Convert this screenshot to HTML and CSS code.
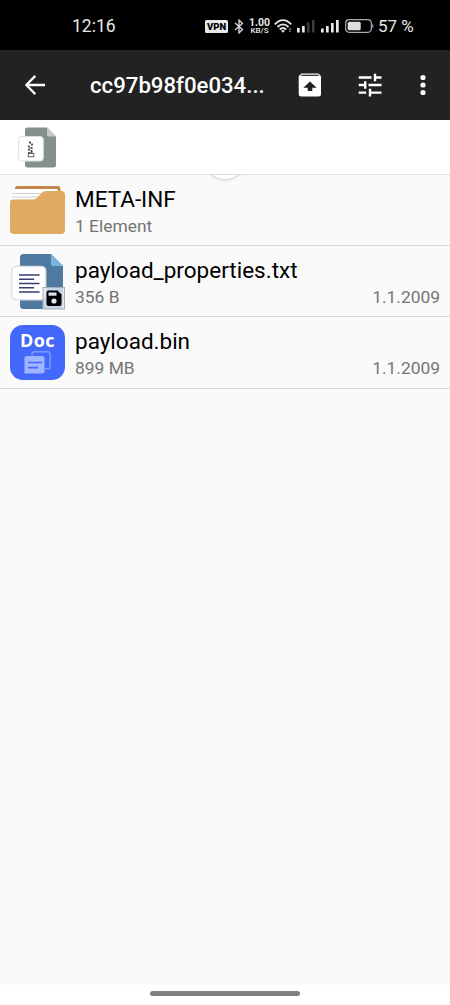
FILE: index.html
```html
<!DOCTYPE html>
<html lang="de">
<head>
	<meta charset="UTF-8">
	<title>META-INF</title>
	<link rel="stylesheet" href="styles.css">
</head>
<body>
	<div class="status">
		<span class="time">12:16</span>
		<div class="status-icons">
			<span class="vpn">VPN</span>
			<svg class="bluetooth" width="10" height="15" viewBox="0 0 10 15"><path d="M1 4l7.500 6.500L5 14V1l3.500 3.500L1 11" fill="none" stroke="#ddd" stroke-width="1.300"/></svg>
			<span class="speed"><b>1.00</b><b class="unit">KB/S</b></span>
			<svg class="wifi" width="19" height="14" viewBox="0 0 19 14">
				<g fill="none" stroke="#e8e8e8" stroke-width="1.800">
					<path d="M.8 5.300Q9 -2.900 17.200 5.300"/>
					<path d="M3.500 8Q9 2.800 14.500 8"/>
					<path d="M5.800 10.500Q9 7.600 12.200 10.500"/>
				</g>
				<path d="M7 11.700Q9 10.300 11 11.700L9 13.700z" fill="#e8e8e8"/>
				<path d="M14.500 10.500l1.500-1.800 1.500 1.800zM14.500 11.700h3L16 13.200z" fill="#999"/>
			</svg>
			<svg class="signal" width="18" height="14" viewBox="0 0 18 14">
				<path d="M0 9h2.700v4.500H0zM5 7h2.700v6.500H5z" fill="#e8e8e8"/>
				<path d="M10 3.500h2.500v10H10zM15 1h2.500v12.500H15z" fill="#3c3c3c"/>
			</svg>
			<svg class="signal2" width="18" height="14" viewBox="0 0 18 14">
				<path d="M0 9.500h2.700v4H0zM5 7h2.700v6.500H5zM10 4h2.700v9.500H10zM15 1h2.700v12.500H15z" fill="#e8e8e8"/>
			</svg>
			<svg class="battery" width="29" height="14" viewBox="0 0 29 14">
				<rect x=".7" y=".7" width="25.600" height="12.600" rx="3.500" fill="none" stroke="#aaa" stroke-width="1.200"/>
				<rect x="2.700" y="2.700" width="13" height="8.600" rx="1.500" fill="#e0e0e0"/>
				<path d="M27.300 4.500q1.200 .5 1.200 2.500t-1.200 2.500z" fill="#aaa"/>
			</svg>
			<span class="percent">57 %</span>
		</div>
	</div>

	<div class="toolbar">
		<svg class="back" width="20" height="20" viewBox="0 0 20 20"><path d="M20 10H1.500M10.300 .9L1.300 10l9 9.100" fill="none" stroke="#fff" stroke-width="2.300"/></svg>
		<h1>cc97b98f0e034...</h1>
		<svg class="unarchive" width="24" height="24" viewBox="0 0 24 24">
			<path d="M3.500 .5h17L23 3.200V21q0 2.500-2.500 2.500h-17Q.7 23.500 .7 21V3.200z" fill="#fff"/>
			<path d="M3.300 2.300h17.400" stroke="#222" stroke-width="1.200"/>
			<path d="M12 8.500l6.700 6.300H14.300V18H9.700v-3.200H5.300z" fill="#222"/>
		</svg>
		<svg class="tune" width="24" height="24" viewBox="0 0 24 24">
			<path d="M.7 4.500h12.800M16 4.500h7.500M17 .8v7.500M.7 12h6M7.200 8.200v7.600M10.500 12h13M.7 19.600h7.500M12 15.800v7.600M12 19.600h11.500" fill="none" stroke="#fff" stroke-width="2.400"/>
		</svg>
		<svg class="more" width="6" height="22" viewBox="0 0 6 22"><g fill="#fff"><circle cx="3" cy="3.500" r="2.600"/><circle cx="3" cy="11" r="2.600"/><circle cx="3" cy="18.500" r="2.600"/></g></svg>
	</div>

	<div class="path">
		<svg width="39" height="42" viewBox="0 0 39 42">
			<path d="M9.500 .5H29l9 9V38.500q0 2-2.500 2H9.500q-2.500 0-2.500-2v-35.500Q7 .5 9.500 .5z" fill="#84908b"/>
			<path d="M29 .5l9 9H31q-2 0-2-2z" fill="#c3cbc8"/>
			<rect x=".7" y="9.500" width="24.600" height="24.500" rx="3" fill="#fff" stroke="#ddd"/>
			<path d="M12 14.500v2M14 16.500v2M11 18.500v2M13.500 20v2M11 21.500v2M13.500 23v3M11 25v2" stroke="#555" stroke-width="2"/>
			<rect x="10.300" y="26.500" width="5.500" height="3.200" fill="#fff" stroke="#666"/>
		</svg>
	</div>

	<!-- refresh indicator, mostly under the path bar -->
	<div class="refresh"><div class="spinner"></div></div>

	<div class="list">
		<div class="row">
			<svg class="icon" width="55" height="55" viewBox="0 0 55 55">
				<path d="M5 5Q5 3 7.500 3H47.500q3 0 3 3v5H4z" fill="#c58749"/>
				<path d="M4.500 6H46q2 0 2 2v8H1V10q0-2 3-2z" fill="#fff"/>
				<path d="M2 10.500h38M1 14h30" stroke="#cdd1d3" stroke-width="1.200"/>
				<path d="M0 19.500q0-3 3-3h20q2.500 0 4-1.800L31 10.500Q33 8 36 8h15q4 0 4 4v35q0 4-4 4H4q-4 0-4-4z" fill="#e1aa61"/>
			</svg>
			<div class="info">
				<div class="name">META-INF</div>
				<div class="meta"><span>1 Element</span></div>
			</div>
		</div>
		<div class="row">
			<svg class="icon" width="55" height="57" viewBox="0 0 55 57">
				<path d="M13.500 1H41l12 12v39.500q0 3.500-3.500 3.500h-36q-3.500 0-3.500-3.500v-48Q10 1 13.500 1z" fill="#5079a1"/>
				<path d="M41 1l12 12H43q-2 0-2-2z" fill="#77b5da"/>
				<rect x="1.800" y="13.300" width="34" height="33.500" rx="4.500" fill="#fff" stroke="#ddd" stroke-width="1.300"/>
				<path d="M9 22h20.500M9 26.300h15M9 30.500h20.500M9 34.700h15M9 39h20.500" stroke="#343f76" stroke-width="1.500"/>
				<rect x="33" y="34.500" width="21.500" height="21.500" fill="#dce6f2" fill-opacity=".85" stroke="#a8afb8"/>
				<path d="M38.500 37.500h9l4 4v9.500q0 2-2 2h-11q-2 0-2-2V39.500q0-2 2-2z" fill="#000"/>
				<path d="M38.500 39.500h8v3.200h-8z" fill="#dce6f2"/>
				<circle cx="44" cy="48" r="2.600" fill="#dce6f2"/>
			</svg>
			<div class="info">
				<div class="name">payload_properties.txt</div>
				<div class="meta"><span>356 B</span><span>1.1.2009</span></div>
			</div>
		</div>
		<div class="row">
			<div class="icon doc">
				<span>Doc</span>
				<svg width="28" height="24" viewBox="0 0 28 24">
					<path d="M8 4.500V3q0-2.300 2.300-2.300h13.500q2.300 0 2.300 2.300v12.500q0 2.300-2.300 2.300H21" fill="none" stroke="#7f9aff" stroke-width="1.500"/>
					<path d="M2.800 5h15.400q2.300 0 2.300 2.300v13q0 2.300-2.300 2.300H.5v-15.300Q.5 5 2.800 5z" fill="#a0b5ff"/>
					<path d="M4 11.500h14M4 16.700h10" stroke="#4468fb" stroke-width="1.700"/>
				</svg>
			</div>
			<div class="info">
				<div class="name">payload.bin</div>
				<div class="meta"><span>899 MB</span><span>1.1.2009</span></div>
			</div>
		</div>
	</div>

	<div class="nav"><div class="pill"></div></div>
</body>
</html>
```

FILE: styles.css
```css
* {
	box-sizing: border-box;
}

body {
	margin: 0;
	height: 1005px;
	display: flex;
	flex-direction: column;
	background-color: #fafafa;
	font-family: Roboto, sans-serif;
	overflow: hidden;
}

svg {
	display: block;
	flex: none;
}

.status {
	height: 50px;
	padding: 2px 37px 0 72px;
	display: flex;
	align-items: center;
	justify-content: space-between;
	background-color: #000;
	color: #e8e8e8;
	flex: none;
}

.time, .percent {
	font-size: 17.5px;
	line-height: 24px;
	white-space: nowrap;
}

.status-icons {
	display: flex;
	align-items: center;
}

.vpn {
	width: 23px;
	height: 13px;
	border-radius: 1.5px;
	background-color: #e8e8e8;
	color: #000;
	font-size: 9.5px;
	font-weight: 900;
	line-height: 13px;
	text-align: center;
}

.bluetooth {
	margin-left: 6px;
}

.speed {
	width: 21px;
	margin-left: 5px;
	font-size: 10.5px;
	text-align: center;
}

.speed b {
	display: block;
	line-height: 9px;
}

.speed .unit {
	font-size: 8px;
	font-weight: 500;
	line-height: 8px;
}

.wifi, .signal {
	margin-left: 4px;
}

.signal2, .battery {
	margin-left: 6px;
}

.percent {
	width: 35px;
	margin-left: 4px;
	font-size: 17px;
}

.toolbar {
	height: 70px;
	padding: 0 24px 0 25px;
	display: flex;
	align-items: center;
	background-color: #222;
	color: #fff;
	flex: none;
}

h1 {
	width: 180px;
	margin: 0 0 0 45px;
	font-size: 22.2px;
	font-weight: 500;
	line-height: 30px;
	white-space: nowrap;
}

.unarchive {
	margin-left: 28px;
}

.tune {
	margin-left: 36px;
}

.more {
	margin-left: auto;
}

.path {
	height: 55px;
	padding: 7px 18px;
	background-color: #fff;
	border-bottom: 1px solid #ddd;
	flex: none;
	position: relative;
	z-index: 1;
}

.refresh {
	position: absolute;
	left: 200px;
	top: 175px;
	width: 50px;
	height: 10px;
	overflow: hidden;
}

.spinner {
	width: 42px;
	height: 42px;
	margin: -38px auto 0;
	border-radius: 50%;
	background-color: #fff;
	box-shadow: 0 1px 3px rgba(0, 0, 0, .2);
}

.list {
	flex: 1;
}

.row {
	height: 71px;
	padding: 8px 10px 0;
	display: flex;
	border-bottom: 1px solid #d9d9d9;
}

.row + .row {
	height: 71.3px;
}

.row + .row svg.icon {
	margin-top: -1px;
}

.icon {
	width: 55px;
	flex: none;
}

.doc {
	height: 55px;
	border-radius: 13px;
	background-color: #4468fb;
	color: #fff;
	display: flex;
	flex-direction: column;
	align-items: center;
}

.doc span {
	height: 26px;
	font-family: "Open Sans", sans-serif;
	font-size: 18px;
	font-weight: 700;
	letter-spacing: .4px;
	line-height: 31px;
}

.info {
	flex: 1;
	margin-left: 10px;
}

.name {
	font-size: 22.5px;
	line-height: 32px;
	color: #000;
}

.meta {
	display: flex;
	justify-content: space-between;
	padding-top: 1px;
	font-size: 17.4px;
	line-height: 21px;
	color: #757575;
}

.nav {
	height: 20px;
	padding-top: 6px;
	background-color: #fff;
	flex: none;
}

.pill {
	width: 150px;
	height: 5px;
	margin: 0 auto;
	border-radius: 3px;
	background-color: #808080;
}
```
